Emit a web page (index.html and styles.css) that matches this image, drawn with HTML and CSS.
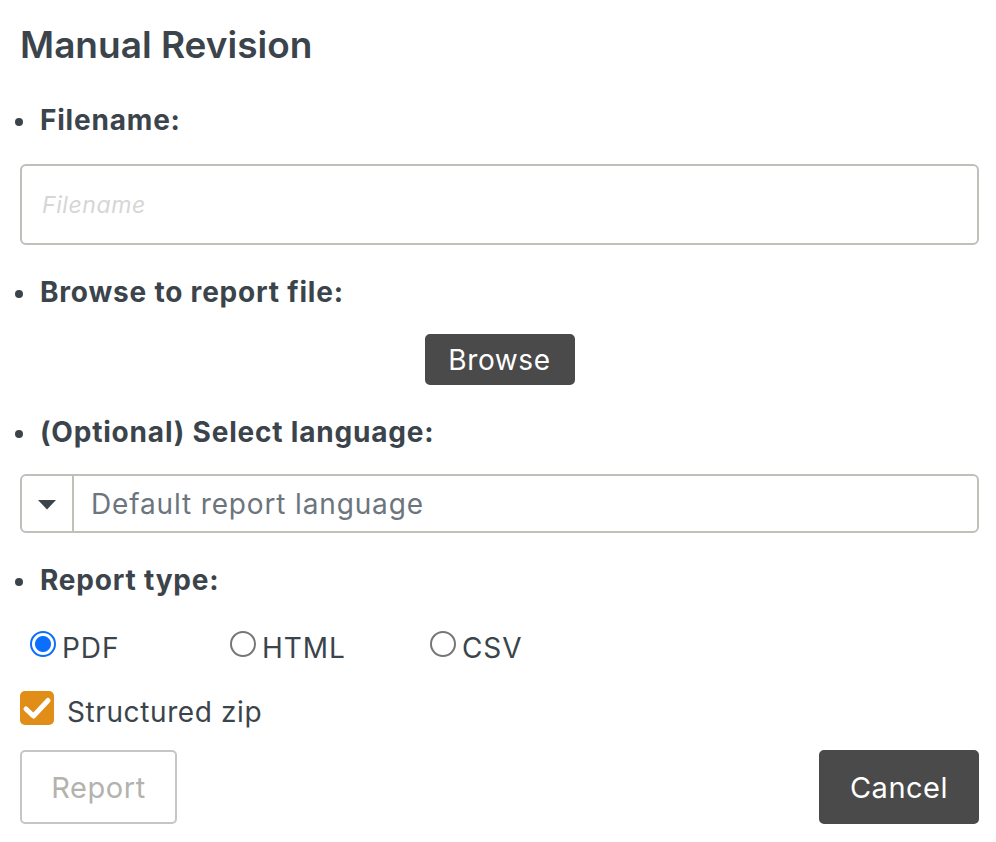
FILE: index.html
```html
<!DOCTYPE html>
<html lang="en">
<head>
<meta charset="utf-8">
<title>Manual Revision</title>
<link rel="stylesheet" href="styles.css">
</head>
<body>
<div class="dialog">
  <h2 class="title">Manual Revision</h2>

  <div class="label label-first">Filename:</div>
  <input class="text-input" type="text" placeholder="Filename">

  <div class="label">Browse to report file:</div>
  <div class="browse-row">
    <button class="btn btn-dark btn-browse" type="button">Browse</button>
  </div>

  <div class="label">(Optional) Select language:</div>
  <div class="select">
    <div class="select-toggle">
      <svg class="caret" width="18" height="10" viewBox="0 0 18 10"><path d="M0 0 L18 0 L9 9.5 Z" fill="#3b444b"/></svg>
    </div>
    <div class="select-value">Default report language</div>
  </div>

  <div class="label">Report type:</div>
  <div class="radio-row">
    <label class="radio-opt"><span class="radio checked"></span><span>PDF</span></label>
    <label class="radio-opt"><span class="radio"></span><span>HTML</span></label>
    <label class="radio-opt"><span class="radio"></span><span>CSV</span></label>
  </div>

  <label class="check-row">
    <span class="checkbox">
      <svg width="34" height="34" viewBox="0 0 34 34"><path d="M6 18 L13.5 25 L28 9.5" fill="none" stroke="#fff" stroke-width="5" stroke-linecap="round" stroke-linejoin="round"/></svg>
    </span>
    <span class="check-text">Structured zip</span>
  </label>

  <div class="actions">
    <button class="btn btn-light" type="button">Report</button>
    <button class="btn btn-dark btn-cancel" type="button">Cancel</button>
  </div>
</div>
</body>
</html>
```

FILE: styles.css
```css
* { box-sizing: border-box; }

html, body {
  margin: 0;
  padding: 0;
  background: #ffffff;
}

body {
  font-family: "Inter", "Lato", "Liberation Sans", sans-serif;
  color: #3b444b;
}

.dialog {
  width: 996px;
  height: 842px;
  padding: 22px 17px 0 20px;
  background: #fff;
  border-radius: 0 0 0 12px;
  overflow: hidden;
}

.title {
  margin: 0;
  font-size: 37px;
  line-height: 46px;
  font-weight: 600;
  color: #3b444b;
}

.label {
  position: relative;
  margin-top: 30px;
  padding-left: 20px;
  font-size: 28px;
  line-height: 34px;
  font-weight: 700;
  letter-spacing: 0.8px;
  color: #3b444b;
}

.label-first { margin-top: 35px; }

.label::before {
  content: "";
  position: absolute;
  left: -5px;
  top: 15px;
  width: 8px;
  height: 8px;
  border-radius: 50%;
  background: #3b444b;
}

.text-input {
  display: block;
  width: 100%;
  height: 81px;
  margin-top: 27px;
  padding: 0 20px;
  border: 2px solid #c2bfba;
  border-radius: 6px;
  font-family: inherit;
  font-size: 23px;
  letter-spacing: 0.6px;
  color: #3b444b;
  background: #fff;
  outline: none;
}

.text-input::placeholder {
  font-style: italic;
  color: #d6d6d6;
}

.browse-row {
  display: flex;
  justify-content: center;
  margin-top: 25px;
}

.btn {
  font-family: inherit;
  border-radius: 5px;
  cursor: pointer;
  padding: 0;
}

.btn-dark {
  background: #4a4a4a;
  color: #fff;
  border: 2px solid #4a4a4a;
}

.btn-browse {
  width: 150px;
  height: 51px;
  font-size: 28px;
  letter-spacing: 0.6px;
}

.select {
  display: flex;
  height: 59px;
  margin-top: 25px;
  border: 2px solid #c2bfba;
  border-radius: 6px;
}

.select-toggle {
  width: 52px;
  display: flex;
  align-items: center;
  justify-content: center;
  border-right: 2px solid #c2bfba;
  padding-top: 2px;
}

.select-value {
  display: flex;
  align-items: center;
  padding-left: 17px;
  font-size: 28px;
  letter-spacing: 0.85px;
  color: #6c757d;
}

.radio-row {
  display: grid;
  grid-template-columns: 200px 200px 200px;
  margin-top: 34px;
  padding-left: 10px;
  font-size: 28px;
  line-height: 34px;
  letter-spacing: 0.9px;
}

.radio-opt {
  display: flex;
  align-items: flex-start;
  gap: 6px;
}

.radio {
  width: 26px;
  height: 26px;
  border-radius: 50%;
  border: 2px solid #767676;
  background: #fff;
  margin-top: 0;
  flex: none;
}

.radio.checked {
  border: 2px solid #0b6efd;
  background: radial-gradient(circle, #0b6efd 0 7.5px, #fff 8.5px);
}

.check-row {
  display: flex;
  align-items: flex-start;
  gap: 13px;
  margin-top: 26px;
  font-size: 28px;
  line-height: 34px;
  letter-spacing: 0.6px;
}

.checkbox {
  width: 34px;
  height: 34px;
  border-radius: 5px;
  background: #e08e17;
  display: block;
  flex: none;
}

.checkbox svg { display: block; }

.check-text {
  margin-top: 4px;
}

.actions {
  display: flex;
  justify-content: space-between;
  margin-top: 21px;
}

.btn-light {
  width: 157px;
  height: 74px;
  background: #fff;
  border: 2px solid #c8c6c2;
  color: #b4b2ae;
  font-size: 29px;
  letter-spacing: 0.6px;
}

.btn-cancel {
  width: 160px;
  height: 74px;
  font-size: 29px;
  letter-spacing: 0.5px;
}
```
